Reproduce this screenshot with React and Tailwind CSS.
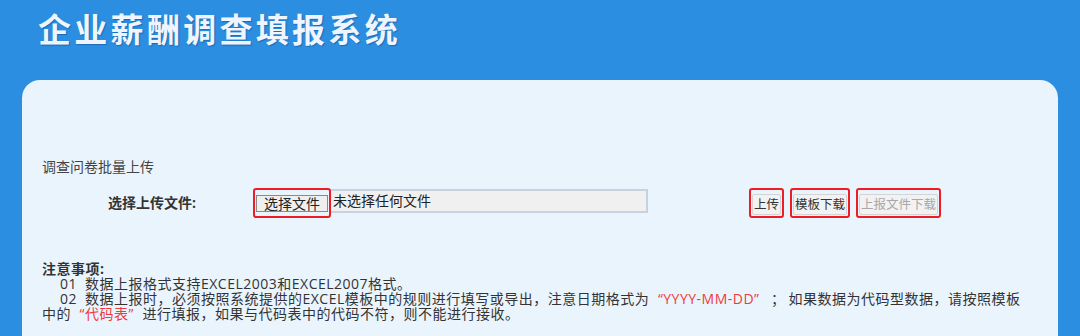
import React from 'react';

function ActionButton({ label, disabled }) {
    return (
        <div className="rounded-[3px] border-2 border-[#ee1c25] p-[1px]">
            <button
                type="button"
                className={`h-[21px] rounded-[2px] border border-[#d4d4d4] bg-[#f2f2f2] px-[1px] text-[12.5px] leading-[19px] ${disabled ? 'text-[#a8a8a8]' : 'text-[#333]'}`}
            >
                {label}
            </button>
        </div>
    );
}

const OpenQuote = () => <span className="inline-block w-[14px] text-right">“</span>;
const CloseQuote = () => <span className="inline-block w-[14px] text-left">”</span>;

export default function App() {
    return (
        <div className="h-[336px] w-[1080px] overflow-hidden bg-[#2b8ee0] font-['Open_Sans','Noto_Sans_CJK_SC',sans-serif]">
            <div className="h-[80px] pl-[38px] pt-[11px]">
                <h1 className="text-[33px] font-bold leading-[38px] tracking-[3.3px] text-[#eef5ff] [text-shadow:1px_1px_1px_rgba(0,40,100,0.35)]">
                    企业薪酬调查填报系统
                </h1>
            </div>

            <div className="mx-[22px] h-[300px] rounded-t-[18px] bg-[#eaf4fd] pl-[20px] pt-[79px]">
                <p className="text-[14px] leading-[16px] text-[#444]">调查问卷批量上传</p>

                <div className="mt-[14px] flex h-[27px] items-center">
                    <span className="ml-[66px] w-[145px] text-[14px] font-bold text-[#333]">选择上传文件:</span>
                    <div className="flex items-start">
                        <div className="rounded-[3px] border-2 border-[#ee1c25] p-[1px]">
                            <button
                                type="button"
                                className="h-[17px] w-[72px] border border-[#8a8a8a] bg-[#efefef] text-[14px] leading-[15px] text-[#222]"
                            >
                                选择文件
                            </button>
                        </div>
                        <div className="mt-[1px] flex h-[24px] w-[317px] items-center border-2 border-l-0 border-[#c4d3df] bg-[#f0f0f0] pl-[2px] text-[14px] text-[#222]">
                            未选择任何文件
                        </div>
                    </div>
                    <div className="ml-[101px] flex gap-[6px]">
                        <ActionButton label="上传" />
                        <ActionButton label="模板下载" />
                        <ActionButton label="上报文件下载" disabled />
                    </div>
                </div>

                <div className="mt-[45px] text-[14px] leading-[15px] tracking-[0.5px] text-[#333]">
                    <p className="font-bold">注意事项:</p>
                    <p className="whitespace-nowrap pl-[18px]">
                        <span className="inline-block w-[25px]">01</span>
                        数据上报格式支持EXCEL2003和EXCEL2007格式。
                    </p>
                    <p className="whitespace-nowrap pl-[18px]">
                        <span className="inline-block w-[25px]">02</span>
                        数据上报时，必须按照系统提供的EXCEL模板中的规则进行填写或导出，注意日期格式为
                        <span className="text-[#f03a3a]">
                            <OpenQuote />YYYY-MM-DD<CloseQuote />
                        </span>
                        <span className="mx-[3px]">；</span>如果数据为代码型数据，请按照模板
                    </p>
                    <p className="whitespace-nowrap">
                        中的
                        <span className="text-[#f03a3a]">
                            <OpenQuote />代码表<CloseQuote />
                        </span>
                        进行填报，如果与代码表中的代码不符，则不能进行接收。
                    </p>
                </div>
            </div>
        </div>
    );
}
